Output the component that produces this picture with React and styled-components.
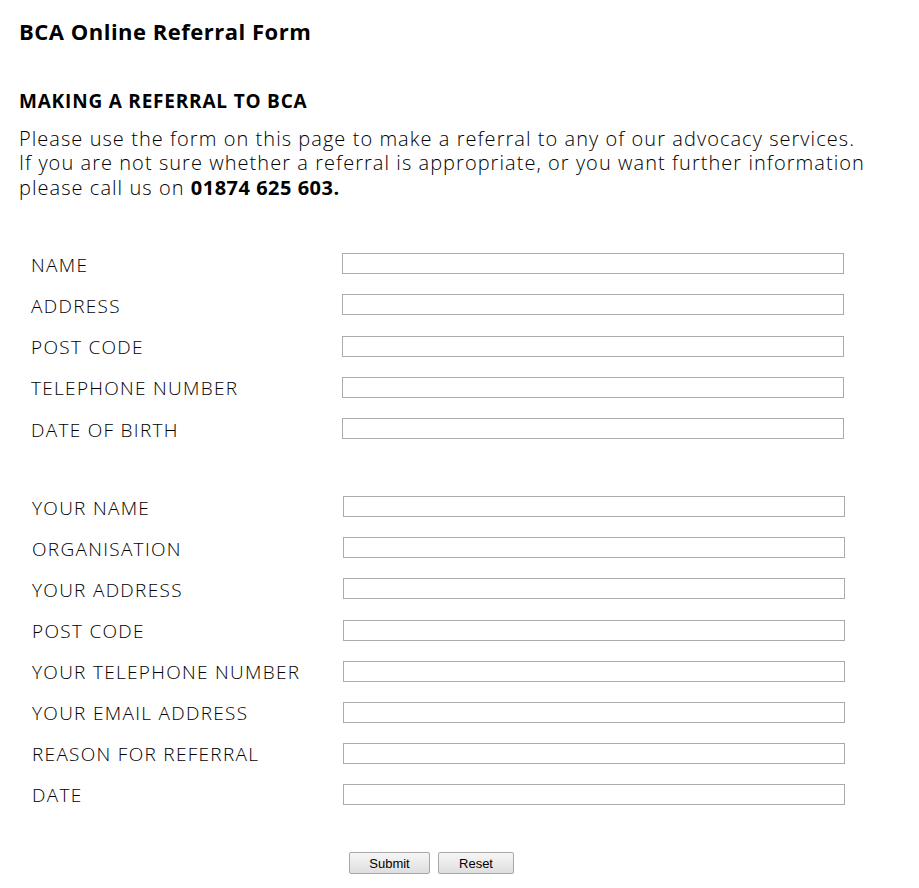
import React from "react";
import styled, { createGlobalStyle } from "styled-components";

const Global = createGlobalStyle`
  html, body { margin: 0; padding: 0; background: #fff; }
  body { font-family: "Open Sans", "DejaVu Sans", sans-serif; color: #000; }
`;

const Page = styled.div`
  padding: 17.5px 0 0 19px;
  width: 900px;
  box-sizing: border-box;
`;

const Title = styled.h1`
  margin: 0;
  font-size: 22px;
  line-height: 26px;
  font-weight: 700;
  letter-spacing: 0.5px;
`;

const Heading = styled.h2`
  margin: 46px 0 0;
  font-size: 19px;
  line-height: 22px;
  font-weight: 700;
  letter-spacing: 0.8px;
`;

const Intro = styled.p`
  margin: 15px 0 0;
  font-size: 20px;
  line-height: 24.5px;
  font-weight: 300;
  letter-spacing: 1.05px;
  white-space: nowrap;
  strong { font-weight: 700; letter-spacing: 0.5px; }
`;

const Form = styled.form`
  margin: 43px 0 0;
  display: flex;
  flex-direction: column;
`;

const Group = styled.div`
  display: grid;
  grid-template-columns: 311px 502px;
  grid-auto-rows: ${(p) => p.$row}px;
  align-items: center;
  padding-left: ${(p) => p.$indent}px;
  & + & { margin-top: 37px; }
`;

const Label = styled.label`
  font-size: 19px;
  line-height: 22px;
  font-weight: 300;
  letter-spacing: 1.3px;
  padding-top: 2px;
  white-space: nowrap;
`;

const Field = styled.input`
  box-sizing: border-box;
  width: 502px;
  height: 21px;
  margin: 0;
  padding: 0 3px;
  border: 1px solid #ababab;
  background: #fff;
  font-size: 13px;
  outline: none;
`;

const Buttons = styled.div`
  display: flex;
  gap: 8px;
  margin: 37px 0 0 330px;
`;

const Button = styled.button`
  box-sizing: border-box;
  width: ${(p) => p.$w}px;
  height: 22px;
  padding: 0;
  border: 1px solid #a7a7a7;
  border-radius: 2px;
  background: linear-gradient(#f6f6f6, #dedede);
  font-family: Arial, "Liberation Sans", sans-serif;
  font-size: 13px;
  color: #000;
`;

const group1 = ["NAME", "ADDRESS", "POST CODE", "TELEPHONE NUMBER", "DATE OF BIRTH"];
const group2 = [
  "YOUR NAME",
  "ORGANISATION",
  "YOUR ADDRESS",
  "POST CODE",
  "YOUR TELEPHONE NUMBER",
  "YOUR EMAIL ADDRESS",
  "REASON FOR REFERRAL",
  "DATE",
];

export default function App() {
  return (
    <>
      <Global />
      <Page>
        <Title>BCA Online Referral Form</Title>
        <Heading>MAKING A REFERRAL TO BCA</Heading>
        <Intro>
          Please use the form on this page to make a referral to any of our advocacy services.
          <br />
          If you are not sure whether a referral is appropriate, or you want further information
          <br />
          please call us on <strong>01874 625 603.</strong>
        </Intro>
        <Form onSubmit={(e) => e.preventDefault()}>
          <Group $row={41.25} $indent={12}>
            {group1.map((l) => (
              <React.Fragment key={l}>
                <Label>{l}</Label>
                <Field type="text" />
              </React.Fragment>
            ))}
          </Group>
          <Group $row={41.1} $indent={13}>
            {group2.map((l, i) => (
              <React.Fragment key={l + i}>
                <Label>{l}</Label>
                <Field type="text" />
              </React.Fragment>
            ))}
          </Group>
          <Buttons>
            <Button type="submit" $w={81}>Submit</Button>
            <Button type="reset" $w={76}>Reset</Button>
          </Buttons>
        </Form>
      </Page>
    </>
  );
}
